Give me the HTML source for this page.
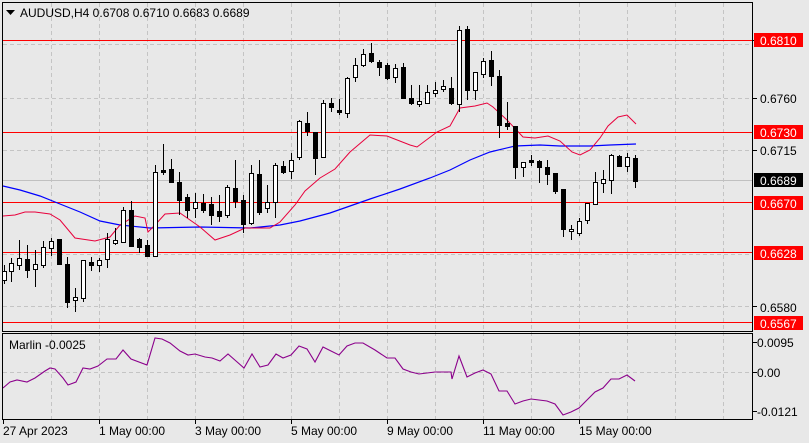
<!DOCTYPE html>
<html><head><meta charset="utf-8"><style>
html,body{margin:0;padding:0;background:#e8e8e8;}
svg{display:block;font-family:"Liberation Sans",Tahoma,sans-serif;}
</style></head><body>
<svg width="809" height="443" viewBox="0 0 809 443" xmlns="http://www.w3.org/2000/svg">
<rect width="809" height="443" fill="#e8e8e8"/>
<g stroke="#c4c4c4" stroke-dasharray="4,3" stroke-width="1" shape-rendering="crispEdges">
<line x1="51.5" y1="3" x2="51.5" y2="419"/><line x1="99.5" y1="3" x2="99.5" y2="419"/><line x1="147.5" y1="3" x2="147.5" y2="419"/><line x1="195.5" y1="3" x2="195.5" y2="419"/><line x1="243.5" y1="3" x2="243.5" y2="419"/><line x1="291.5" y1="3" x2="291.5" y2="419"/><line x1="339.5" y1="3" x2="339.5" y2="419"/><line x1="387.5" y1="3" x2="387.5" y2="419"/><line x1="435.5" y1="3" x2="435.5" y2="419"/><line x1="483.5" y1="3" x2="483.5" y2="419"/><line x1="531.5" y1="3" x2="531.5" y2="419"/><line x1="579.5" y1="3" x2="579.5" y2="419"/><line x1="627.5" y1="3" x2="627.5" y2="419"/><line x1="675.5" y1="3" x2="675.5" y2="419"/><line x1="723.5" y1="3" x2="723.5" y2="419"/>
<line x1="3" y1="44.5" x2="752" y2="44.5"/><line x1="3" y1="98.5" x2="752" y2="98.5"/><line x1="3" y1="150.5" x2="752" y2="150.5"/><line x1="3" y1="202.5" x2="752" y2="202.5"/><line x1="3" y1="254.5" x2="752" y2="254.5"/><line x1="3" y1="306.5" x2="752" y2="306.5"/>
<line x1="3" y1="372.5" x2="752" y2="372.5"/>
</g>
<line x1="3" y1="180.5" x2="752" y2="180.5" stroke="#c0c0c0" shape-rendering="crispEdges"/>
<g stroke="#ff0000" stroke-width="1" shape-rendering="crispEdges">
<line x1="3" y1="40.5" x2="752" y2="40.5"/><line x1="3" y1="132.5" x2="752" y2="132.5"/><line x1="3" y1="202.5" x2="752" y2="202.5"/><line x1="3" y1="252.5" x2="752" y2="252.5"/><line x1="3" y1="322.5" x2="752" y2="322.5"/>
</g>
<polyline fill="none" stroke="#0000ff" stroke-width="1.2" points="3,186 20,190 40,196 60,204 80,212 100,221 120,225 150,228 200,227 250,228 280,225 300,221 330,213 350,206 370,199 400,189 430,178 450,170 470,160 490,152 515,146 540,145 560,146 590,146 610,145 636,144"/>
<polyline fill="none" stroke="#e8003c" stroke-width="1" points="3,216 15,215 25,212 35,212 50,214 60,220 75,238 95,241 110,237 120,225 135,216 145,218 148,232 155,225 165,214 180,213 200,227 215,240 230,235 245,228 270,228 280,222 295,205 305,191 320,178 335,169 350,152 370,135 387,136 410,145 417,147 437,132 450,126 460,108 475,106 487,103 493,107 507,120 523,137 535,138 548,136 560,141 572,152 580,155 590,150 600,138 608,126 618,117 627,115 636,124"/>
<g stroke="#000" stroke-width="1" shape-rendering="crispEdges">
<path d="M4.5 265V284M11.5 258V282M19.5 240V270M27.5 245V278M35.5 250V287M43.5 241V268M51.5 238V256M59.5 239V265M67.5 257V308M75.5 288V312M83.5 260V302M91.5 257V271M99.5 258V272M107.5 233V268M115.5 228V245M123.5 207V243M131.5 201V247M139.5 238V253M147.5 240V257M155.5 165V257M163.5 144V175M171.5 159V182M179.5 172V215M187.5 194V218M195.5 193V218M203.5 194V213M211.5 197V225M219.5 195V222M227.5 185V218M235.5 160V208M243.5 195V233M251.5 165V225M259.5 160V215M267.5 185V213M275.5 163V218M283.5 161V174M291.5 153V179M299.5 120V160M307.5 112V136M315.5 132V175M323.5 100V158M331.5 98V112M339.5 99V115M347.5 77V118M355.5 58V82M363.5 49V67M371.5 43V63M379.5 60V76M387.5 63V80M395.5 64V83M403.5 63V98M411.5 85V105M419.5 85V107M427.5 85V104M435.5 82V97M443.5 80V92M451.5 77V105M459.5 26V112M467.5 26V100M475.5 72V100M483.5 58V78M491.5 51V86M499.5 70V138M507.5 102V130M515.5 126V179M523.5 162V177M531.5 155V166M539.5 160V183M547.5 160V185M555.5 175V194M563.5 189V237M571.5 225V240M579.5 218V236M587.5 203V224M595.5 172V205M603.5 170V193M611.5 154V194M619.5 155V167M627.5 153V172M635.5 155V188"/>
</g>
<g stroke="#000" stroke-width="1" shape-rendering="crispEdges">
<g fill="#fff">
<rect x="2.5" y="271.5" width="4" height="9"/><rect x="9.5" y="263.5" width="4" height="8"/><rect x="17.5" y="258.5" width="4" height="7"/><rect x="33.5" y="264.5" width="4" height="5"/><rect x="41.5" y="247.5" width="4" height="18"/><rect x="49.5" y="241.5" width="4" height="7"/><rect x="73.5" y="297.5" width="4" height="3"/><rect x="81.5" y="260.5" width="4" height="38"/><rect x="97.5" y="260.5" width="4" height="5"/><rect x="105.5" y="239.5" width="4" height="20"/><rect x="113.5" y="240.5" width="4" height="3"/><rect x="121.5" y="210.5" width="4" height="32"/><rect x="153.5" y="172.5" width="4" height="84"/><rect x="193.5" y="202.5" width="4" height="6"/><rect x="225.5" y="187.5" width="4" height="28"/><rect x="249.5" y="173.5" width="4" height="50"/><rect x="265.5" y="202.5" width="4" height="6"/><rect x="273.5" y="165.5" width="4" height="37"/><rect x="289.5" y="160.5" width="4" height="11"/><rect x="297.5" y="121.5" width="4" height="36"/><rect x="321.5" y="103.5" width="4" height="54"/><rect x="345.5" y="78.5" width="4" height="35"/><rect x="353.5" y="65.5" width="4" height="12"/><rect x="361.5" y="54.5" width="4" height="11"/><rect x="393.5" y="68.5" width="4" height="9"/><rect x="417.5" y="101.5" width="4" height="3"/><rect x="425.5" y="92.5" width="4" height="11"/><rect x="433.5" y="90.5" width="4" height="3"/><rect x="441.5" y="86.5" width="4" height="3"/><rect x="457.5" y="30.5" width="4" height="74"/><rect x="473.5" y="72.5" width="4" height="18"/><rect x="481.5" y="61.5" width="4" height="13"/><rect x="521.5" y="162.5" width="4" height="5"/><rect x="569.5" y="229.5" width="4" height="2"/><rect x="577.5" y="221.5" width="4" height="12"/><rect x="585.5" y="203.5" width="4" height="17"/><rect x="593.5" y="182.5" width="4" height="22"/><rect x="601.5" y="179.5" width="4" height="4"/><rect x="609.5" y="155.5" width="4" height="25"/><rect x="625.5" y="157.5" width="4" height="9"/>
</g>
<g fill="#000">
<rect x="25.5" y="259.5" width="4" height="11"/><rect x="57.5" y="239.5" width="4" height="25"/><rect x="65.5" y="264.5" width="4" height="38"/><rect x="89.5" y="262.5" width="4" height="3"/><rect x="129.5" y="210.5" width="4" height="36"/><rect x="137.5" y="239.5" width="4" height="8"/><rect x="145.5" y="245.5" width="4" height="11"/><rect x="161.5" y="170.5" width="4" height="2"/><rect x="169.5" y="169.5" width="4" height="13"/><rect x="177.5" y="182.5" width="4" height="18"/><rect x="185.5" y="197.5" width="4" height="13"/><rect x="201.5" y="203.5" width="4" height="7"/><rect x="209.5" y="204.5" width="4" height="11"/><rect x="217.5" y="211.5" width="4" height="5"/><rect x="233.5" y="188.5" width="4" height="13"/><rect x="241.5" y="200.5" width="4" height="24"/><rect x="257.5" y="174.5" width="4" height="38"/><rect x="281.5" y="166.5" width="4" height="6"/><rect x="305.5" y="123.5" width="4" height="8"/><rect x="313.5" y="132.5" width="4" height="26"/><rect x="329.5" y="103.5" width="4" height="4"/><rect x="337.5" y="110.5" width="4" height="2"/><rect x="369.5" y="53.5" width="4" height="8"/><rect x="377.5" y="62.5" width="4" height="5"/><rect x="385.5" y="65.5" width="4" height="13"/><rect x="401.5" y="67.5" width="4" height="31"/><rect x="409.5" y="98.5" width="4" height="5"/><rect x="449.5" y="88.5" width="4" height="15"/><rect x="465.5" y="29.5" width="4" height="61"/><rect x="489.5" y="60.5" width="4" height="16"/><rect x="497.5" y="76.5" width="4" height="49"/><rect x="505.5" y="123.5" width="4" height="3"/><rect x="513.5" y="126.5" width="4" height="41"/><rect x="529.5" y="160.5" width="4" height="2"/><rect x="537.5" y="161.5" width="4" height="6"/><rect x="545.5" y="167.5" width="4" height="7"/><rect x="553.5" y="173.5" width="4" height="18"/><rect x="561.5" y="189.5" width="4" height="40"/><rect x="617.5" y="156.5" width="4" height="10"/><rect x="633.5" y="158.5" width="4" height="23"/>
</g>
</g>
<polyline fill="none" stroke="#8b008b" stroke-width="1.1" points="3,388 10,382 17,380 27,382 35,378 45,371 50,368 55,369 63,378 68,385 76,382 83,368 90,369 98,366 107,359 116,359 123,350 131,359 147,365 155,338 162,339 170,343 180,351 188,355 195,354 205,357 212,358 220,361 228,354 236,361 244,368 252,354 260,367 268,365 276,354 283,358 291,355 299,346 307,349 315,362 323,347 331,351 339,355 347,346 355,343 363,343 375,350 387,358 395,358 403,369 411,372 419,374 427,373 435,372 443,372 451,372 452,379 459,356 467,377 475,373 483,370 491,374 499,391 507,391 515,404 523,401 531,399 539,400 547,401 555,404 563,415 571,412 579,408 587,400 595,392 603,388 611,379 619,379 627,375 635,381"/>
<g fill="none" stroke="#000" stroke-width="1" shape-rendering="crispEdges">
<rect x="2.5" y="2.5" width="750" height="329"/>
<rect x="2.5" y="333.5" width="750" height="86"/>
<path d="M753 40.5h4M753 98.5h4M753 150.5h4M753 306.5h4M753 342.5h4M753 372.5h4M753 411.5h4M3.5 420v4M99.5 420v4M195.5 420v4M291.5 420v4M387.5 420v4M483.5 420v4M579.5 420v4"/>
</g>
<g font-size="12" fill="#000">
<path d="M6 10h9l-4.5 5z" fill="#000"/>
<text x="20" y="17">AUDUSD,H4  0.6708 0.6710 0.6683 0.6689</text>
<text x="9" y="349">Marlin -0.0025</text>
<text x="760" y="103">0.6760</text>
<text x="760" y="155">0.6715</text>
<text x="760" y="312">0.6580</text>
<text x="757" y="347">0.0095</text>
<text x="757" y="377">0.00</text>
<text x="757" y="416">-0.0121</text>
<text x="3" y="435">27 Apr 2023</text>
<text x="99" y="435">1 May 00:00</text>
<text x="195" y="435">3 May 00:00</text>
<text x="291" y="435">5 May 00:00</text>
<text x="387" y="435">9 May 00:00</text>
<text x="483" y="435">11 May 00:00</text>
<text x="579" y="435">15 May 00:00</text>
</g>
<g font-size="12">
<rect x="754" y="33" width="49" height="14" fill="#ff0000"/><text x="760" y="45" fill="#fff">0.6810</text>
<rect x="754" y="125" width="49" height="14" fill="#ff0000"/><text x="760" y="137" fill="#fff">0.6730</text>
<rect x="754" y="173" width="49" height="14" fill="#000"/><text x="760" y="185" fill="#fff">0.6689</text>
<rect x="754" y="196" width="49" height="14" fill="#ff0000"/><text x="760" y="208" fill="#fff">0.6670</text>
<rect x="754" y="246" width="49" height="14" fill="#ff0000"/><text x="760" y="258" fill="#fff">0.6628</text>
<rect x="754" y="316" width="49" height="14" fill="#ff0000"/><text x="760" y="328" fill="#fff">0.6567</text>
</g>
</svg>
</body></html>
